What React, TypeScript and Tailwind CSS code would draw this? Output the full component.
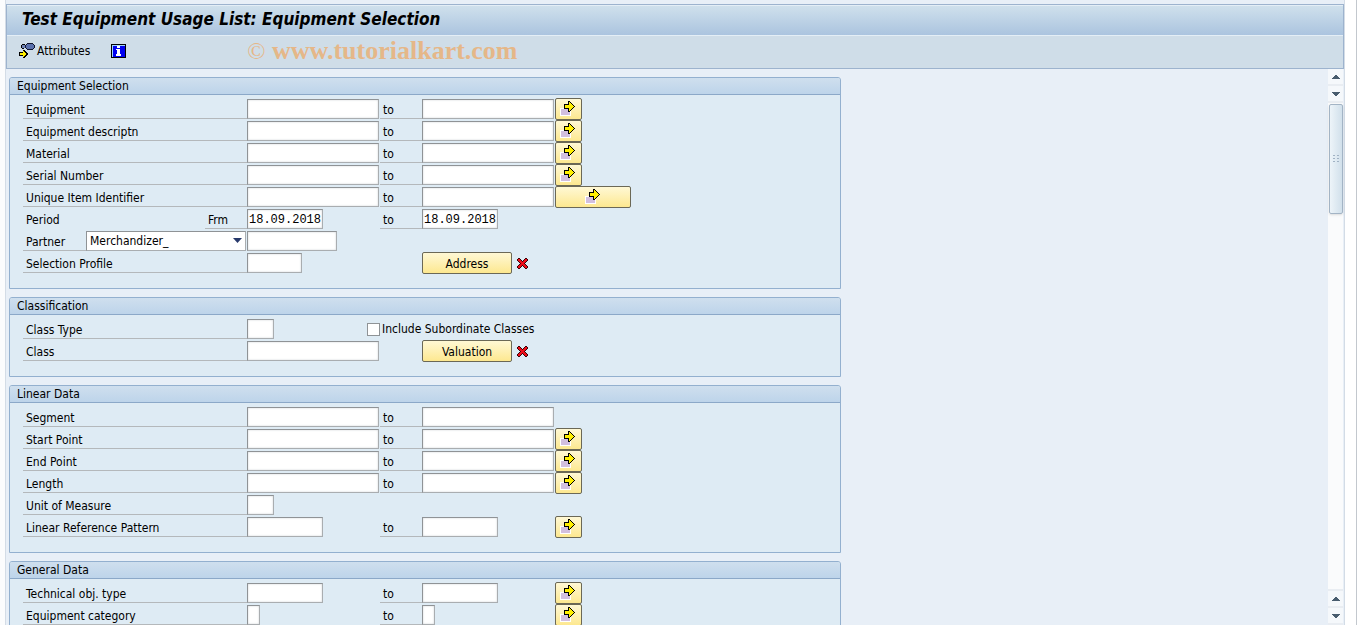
import { useState } from "react";
import type { ReactNode } from "react";
import { clsx } from "clsx";

const sizes = {
  xs: "w-[13px]",
  sm: "w-[27px]",
  md: "w-[55px]",
  date: "w-[76px]",
  partner: "w-[90px]",
  lg: "w-[132px]",
};

type Size = keyof typeof sizes;

function SelectArrowIcon() {
  return (
    <svg width="17" height="16" viewBox="0 0 17 16" shapeRendering="crispEdges" aria-hidden="true">
      <rect x="0" y="8" width="11" height="8" fill="#fff" />
      <rect x="1" y="9" width="9" height="6" fill="#d2bfdf" />
      <path
        d="M8 1h2v1h1v1h1v1h1v1h1v1h1v1h-1v1h-1v1h-1v1h-1v1h-1v1h-2v-3h-4v-5h4z"
        fill="#000"
      />
      <path d="M9 2h1v1h1v1h1v1h1v1h1v1h-1v1h-1v1h-1v1h-1v1h-1v-3h-4v-3h4z" fill="#ffef00" />
    </svg>
  );
}

function AttributesIcon() {
  return (
    <svg width="16" height="16" viewBox="0 0 16 16" shapeRendering="crispEdges" aria-hidden="true">
      <path d="M3 1h3v1h-3zM2 2h1v3h-1zM3 5h2v1h-2z" fill="#000" />
      <rect x="3" y="2" width="3" height="3" fill="#6f82b4" />
      <path d="M8 0h6v1h1v1h1v3h-1v1h-1v1h-6v-1h-1v-1h-1v-3h1v-1h1z" fill="#10142c" />
      <path d="M8 1h6v1h1v3h-1v1h-6v-1h-1v-3h1z" fill="#5a70ac" />
      <path d="M4 7h2v1h1v1h1v1h1v2h-1v1h-1v1h-1v1h-2v-2h-4v-4h4z" fill="#000" />
      <path d="M5 8v1h1v1h1v1h1v0h-1v1h-1v1h-1v1h-1v-2h-3v-2h3v-2z" fill="#ffef00" />
    </svg>
  );
}

function InfoIcon() {
  return (
    <svg width="15" height="14" viewBox="0 0 15 14" shapeRendering="crispEdges" aria-hidden="true">
      <rect width="15" height="14" fill="#000" />
      <rect x="1" y="1" width="13" height="12" fill="#9fd4ff" />
      <rect x="2" y="2" width="12" height="11" fill="#0000f0" />
      <path d="M6 2h3v2h-3zM5 5h4v5h1v2h-5v-2h1v-4h-1z" fill="#fff" />
    </svg>
  );
}

function CrossIcon() {
  return (
    <svg
      className="ml-[5px]"
      width="11"
      height="11"
      viewBox="0 0 11 11"
      shapeRendering="crispEdges"
      aria-hidden="true"
    >
      <path
        d="M1 0h2v1h-2zM8 0h2v1h-2zM0 1h4v1h-4zM7 1h4v1h-4zM0 2h5v1h-5zM6 2h5v1h-5zM1 3h9v1h-9zM2 4h7v1h-7zM3 5h5v1h-5zM2 6h7v1h-7zM1 7h9v1h-9zM0 8h5v1h-5zM6 8h5v1h-5zM0 9h4v1h-4zM7 9h4v1h-4zM1 10h2v1h-2zM8 10h2v1h-2z"
        fill="#3a0408"
      />
      <path
        d="M1 1h2v1h-2zM8 1h2v1h-2zM1 2h3v1h-3zM7 2h3v1h-3zM2 3h3v1h-3zM6 3h3v1h-3zM3 4h5v1h-5zM4 5h3v1h-3zM3 6h5v1h-5zM2 7h3v1h-3zM6 7h3v1h-3zM1 8h3v1h-3zM7 8h3v1h-3zM1 9h2v1h-2zM8 9h2v1h-2z"
        fill="#ee0c18"
      />
    </svg>
  );
}

function Field({
  id,
  label,
  size = "lg",
  value,
}: {
  id?: string;
  label?: string;
  size?: Size;
  value?: string;
}) {
  return (
    <input
      id={id}
      aria-label={label}
      type="text"
      defaultValue={value}
      className={clsx(
        "h-5 shrink-0 border border-[#a9adb0] border-t-[#8f9396] border-l-[#8f9396] bg-white px-px pt-0.5 font-['Liberation_Mono',monospace] text-xs shadow-[inset_0_0_2px_#c8ccd0] outline-none",
        sizes[size],
      )}
    />
  );
}

function MoreButton({ label, wide }: { label: string; wide?: boolean }) {
  return (
    <button
      type="button"
      aria-label={`Multiple selection for ${label}`}
      className={clsx(
        "ml-px flex h-[22px] shrink-0 justify-center rounded-xs border border-[#6b6856] bg-linear-to-b from-[#fff8d4] to-[#fde88f] pt-px",
        wide ? "w-[76px]" : "w-[27px]",
      )}
    >
      <SelectArrowIcon />
    </button>
  );
}

function TextButton({ children }: { children: ReactNode }) {
  return (
    <button
      type="button"
      className="h-[22px] w-[90px] shrink-0 rounded-xs border border-[#6b6856] bg-linear-to-b from-[#fff8d4] to-[#fde88f] pt-0.5"
    >
      {children}
    </button>
  );
}

function Row({ children }: { children: ReactNode }) {
  return <div className="flex h-[22px] items-center">{children}</div>;
}

function RowLabel({ htmlFor, children }: { htmlFor: string; children: ReactNode }) {
  return (
    <label
      htmlFor={htmlFor}
      className="h-5 w-56 shrink-0 border-b border-[#b4b8bb] pl-[3px] leading-[22px]"
    >
      {children}
    </label>
  );
}

function ToLabel({ htmlFor }: { htmlFor: string }) {
  return (
    <label
      htmlFor={htmlFor}
      className="h-5 w-[42px] shrink-0 border-b border-[#b4b8bb] pl-[3px] leading-[22px]"
    >
      to
    </label>
  );
}

function RangeRow({
  id,
  label,
  size = "lg",
  more = "normal",
}: {
  id: string;
  label: string;
  size?: Size;
  more?: "normal" | "wide" | "none";
}) {
  return (
    <Row>
      <RowLabel htmlFor={`${id}-from`}>{label}</RowLabel>
      <div className="flex w-[133px] shrink-0">
        <Field id={`${id}-from`} size={size} />
      </div>
      <ToLabel htmlFor={`${id}-to`} />
      <div className="flex w-[132px] shrink-0">
        <Field id={`${id}-to`} size={size} />
      </div>
      {more !== "none" && <MoreButton label={label} wide={more === "wide"} />}
    </Row>
  );
}

function Group({ title, children }: { title: string; children: ReactNode }) {
  return (
    <section className="w-full max-w-[832px] rounded-t-[3px] border border-[#93b0cf] bg-[#deebf4]">
      <h2 className="h-[17px] rounded-t-xs border-b border-[#8ba8c8] bg-linear-to-b from-[#cfdfee] to-[#bdd4ea] pl-[7px] leading-4">
        {title}
      </h2>
      <div className="pt-[3px] pb-3.5 pl-[13px]">{children}</div>
    </section>
  );
}

function ScrollButton({ direction }: { direction: "up" | "down" }) {
  return (
    <button
      type="button"
      aria-label={`Scroll ${direction}`}
      className="flex h-[17px] shrink-0 items-center justify-center border-b-2 border-[#e9edf2] bg-[#f5f8fb]"
    >
      <svg width="8" height="4" viewBox="0 0 8 4" shapeRendering="crispEdges" aria-hidden="true">
        <path
          d={
            direction === "up"
              ? "M3 0h2v1h1v1h1v1h1v1h-8v-1h1v-1h1v-1h1z"
              : "M0 0h8v1h-1v1h-1v1h-1v1h-2v-1h-1v-1h-1v-1h-1z"
          }
          fill="#485c6e"
        />
      </svg>
    </button>
  );
}

function ScrollBar() {
  return (
    <div className="mr-px flex w-[15px] shrink-0 flex-col bg-[#fafbfc]">
      <ScrollButton direction="up" />
      <ScrollButton direction="down" />
      <div className="mt-px ml-px flex h-[110px] shrink-0 items-center justify-center rounded-xs border border-[#a3b4c5] bg-linear-to-r from-[#edf4f9] to-[#d1e0eb] shadow-sm">
        <svg width="6" height="8" viewBox="0 0 6 8" shapeRendering="crispEdges" aria-hidden="true">
          <path
            d="M0 0h2v1h-2zM4 0h2v1h-2zM0 3h2v1h-2zM4 3h2v1h-2zM0 6h2v1h-2zM4 6h2v1h-2z"
            fill="#a0b2c4"
          />
        </svg>
      </div>
      <div className="grow border-b-2 border-[#e9edf2]" />
      <ScrollButton direction="up" />
      <ScrollButton direction="down" />
    </div>
  );
}

function Toolbar() {
  return (
    <div className="flex h-[33px] items-center border-t border-[#e4eef6] bg-[#cfdde8] pl-3 pb-0.5">
      <button type="button" className="flex items-center gap-0.5">
        <AttributesIcon />
        Attributes
      </button>
      <button type="button" aria-label="Information" className="ml-[21px]">
        <InfoIcon />
      </button>
      <p className="ml-[121px] font-['Liberation_Serif',serif] text-[26px] leading-7 font-bold whitespace-nowrap text-[#e5b788]">
        <span className="text-2xl font-normal">©</span> www.tutorialkart.com
      </p>
    </div>
  );
}

export default function App() {
  const [partner, setPartner] = useState("merchandizer");

  return (
    <div className="flex h-screen overflow-hidden bg-white font-['DejaVu_Sans_Condensed','DejaVu_Sans',sans-serif] text-xs text-black">
      <div className="w-[5px] shrink-0 bg-[#fbfcfd]" />
      <div className="flex min-w-0 grow flex-col border-x border-[#d3dce6] bg-[#e8eff7] pt-1">
        <header className="border border-[#9db3ce]">
          <h1 className="h-[30px] border-t border-[#e4eef6] bg-linear-to-b from-[#cfe0ec] to-[#abc4df] pl-[15px] text-[17px] leading-[26px] font-bold italic">
            Test Equipment Usage List: Equipment Selection
          </h1>
          <Toolbar />
        </header>

        <div className="flex min-h-0 grow">
          <main className="flex min-w-0 grow flex-col gap-2 overflow-hidden pt-2 pl-[3px] *:shrink-0">
            <Group title="Equipment Selection">
              <RangeRow id="equipment" label="Equipment" />
              <RangeRow id="description" label="Equipment descriptn" />
              <RangeRow id="material" label="Material" />
              <RangeRow id="serial" label="Serial Number" />
              <RangeRow id="uii" label="Unique Item Identifier" more="wide" />
              <Row>
                <span className="h-5 w-[182px] shrink-0 pl-[3px] leading-[22px]">Period</span>
                <label
                  htmlFor="period-from"
                  className="h-5 w-[42px] shrink-0 border-b border-[#b4b8bb] pl-[3px] leading-[22px]"
                >
                  Frm
                </label>
                <div className="flex w-[133px] shrink-0">
                  <Field id="period-from" size="date" value="18.09.2018" />
                </div>
                <ToLabel htmlFor="period-to" />
                <Field id="period-to" size="date" value="18.09.2018" />
              </Row>
              <Row>
                <label
                  htmlFor="partner"
                  className="h-5 w-[63px] shrink-0 border-b border-[#b4b8bb] pl-[3px] leading-[22px]"
                >
                  Partner
                </label>
                <div className="relative mr-px flex shrink-0">
                  <select
                    id="partner"
                    value={partner}
                    onChange={(e) => setPartner(e.target.value)}
                    className="h-5 w-40 appearance-none border border-[#a9adb0] border-t-[#8f9396] border-l-[#8f9396] bg-white pl-[3px] outline-none"
                  >
                    <option value="merchandizer">Merchandizer_</option>
                  </select>
                  <svg
                    className="pointer-events-none absolute top-[7px] right-1"
                    width="9"
                    height="5"
                    viewBox="0 0 9 5"
                    aria-hidden="true"
                  >
                    <path d="M0 0h9l-4.5 5z" fill="#27396b" />
                  </svg>
                </div>
                <Field label="Partner number" size="partner" />
              </Row>
              <Row>
                <RowLabel htmlFor="profile">Selection Profile</RowLabel>
                <div className="flex w-[175px] shrink-0">
                  <Field id="profile" size="md" />
                </div>
                <TextButton>Address</TextButton>
                <CrossIcon />
              </Row>
            </Group>

            <Group title="Classification">
              <Row>
                <RowLabel htmlFor="class-type">Class Type</RowLabel>
                <div className="flex w-[120px] shrink-0">
                  <Field id="class-type" size="sm" />
                </div>
                <label className="flex items-center gap-0.5 leading-[22px] whitespace-nowrap">
                  <input
                    type="checkbox"
                    className="size-[13px] appearance-none border border-[#8f9396] bg-white checked:bg-[#27396b]"
                  />
                  Include Subordinate Classes
                </label>
              </Row>
              <Row>
                <RowLabel htmlFor="class">Class</RowLabel>
                <div className="flex w-[175px] shrink-0">
                  <Field id="class" />
                </div>
                <TextButton>Valuation</TextButton>
                <CrossIcon />
              </Row>
            </Group>

            <Group title="Linear Data">
              <RangeRow id="segment" label="Segment" more="none" />
              <RangeRow id="start-point" label="Start Point" />
              <RangeRow id="end-point" label="End Point" />
              <RangeRow id="length" label="Length" />
              <Row>
                <RowLabel htmlFor="unit">Unit of Measure</RowLabel>
                <Field id="unit" size="sm" />
              </Row>
              <RangeRow id="pattern" label="Linear Reference Pattern" size="date" />
            </Group>

            <Group title="General Data">
              <RangeRow id="object-type" label="Technical obj. type" size="date" />
              <RangeRow id="category" label="Equipment category" size="xs" />
            </Group>
          </main>
          <ScrollBar />
        </div>
      </div>
      <div className="mr-px w-3 shrink-0 border-r border-[#c3c8ce] bg-white" />
    </div>
  );
}
